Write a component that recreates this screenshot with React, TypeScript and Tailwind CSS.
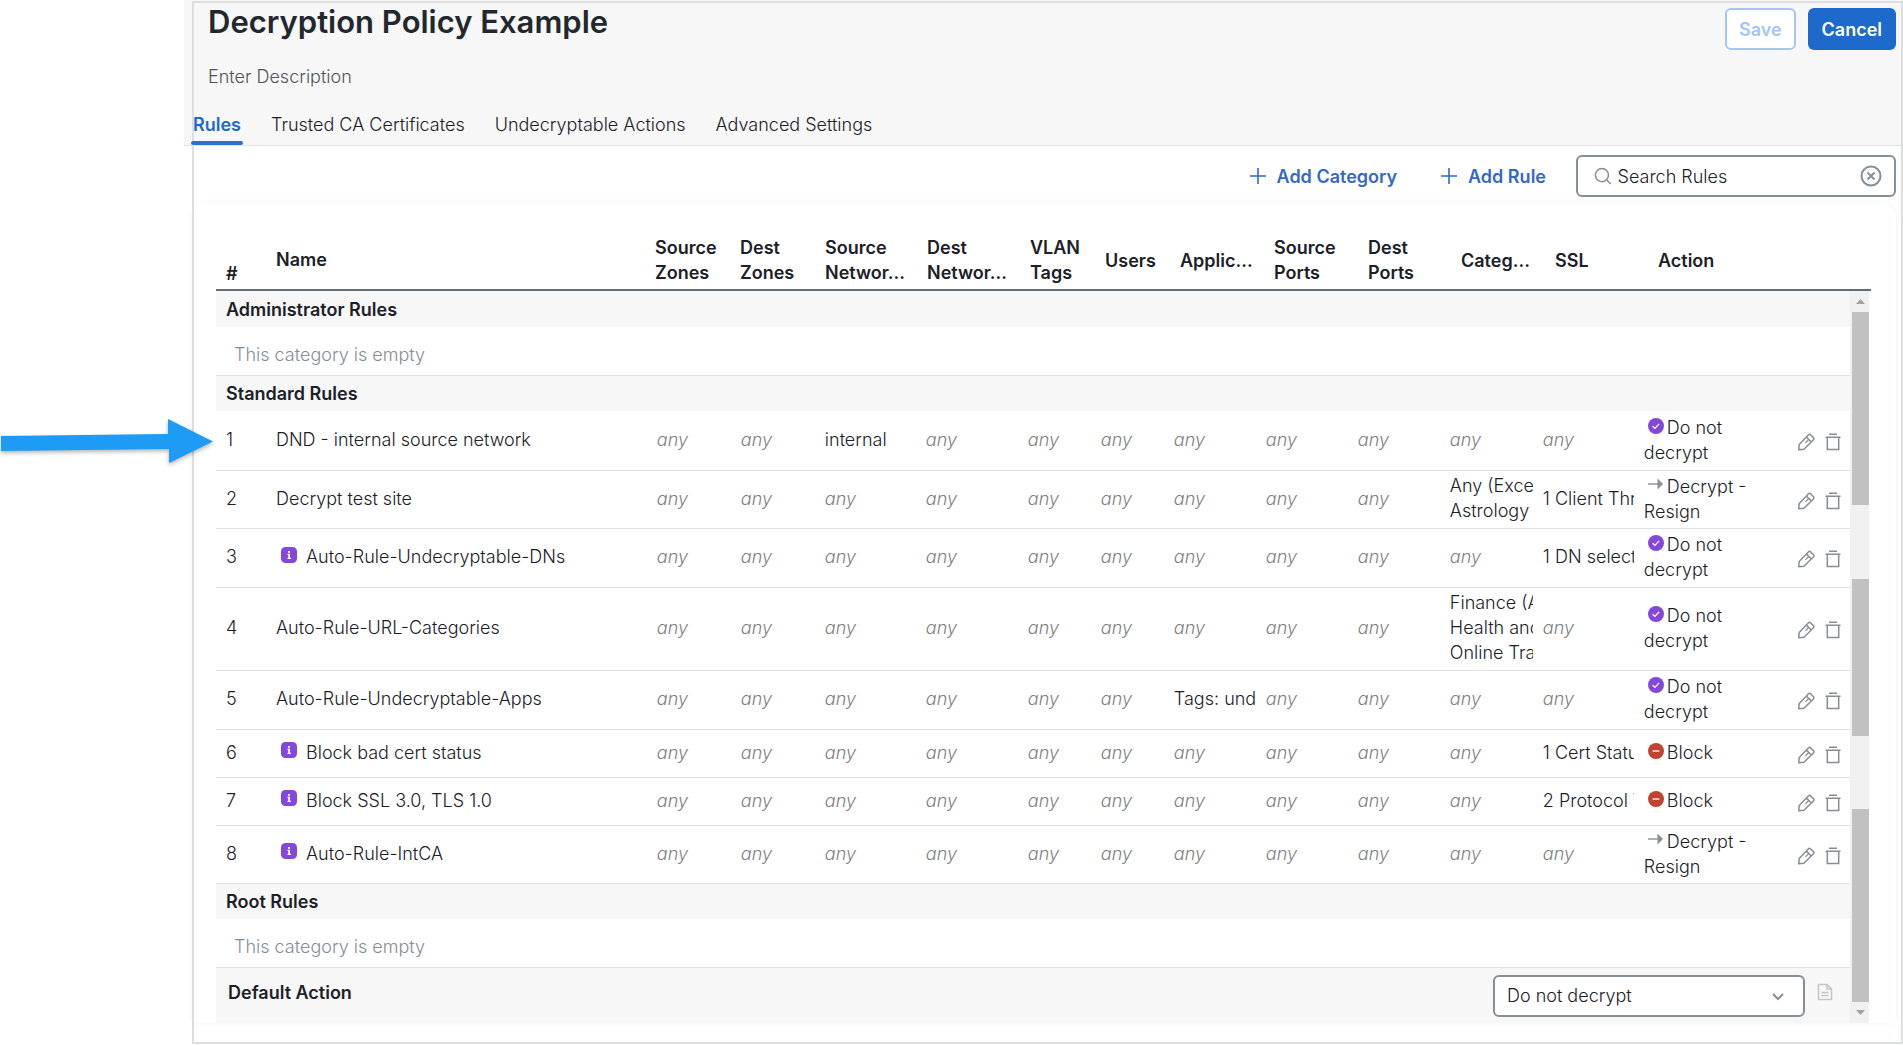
import { useState } from 'react'

const tabs = ['Rules', 'Trusted CA Certificates', 'Undecryptable Actions', 'Advanced Settings']

type Action = 'dnd' | 'resign' | 'block'

type Rule = {
  id: number
  name: string
  info?: boolean
  srcNet?: string
  apps?: string
  categories?: string[]
  ssl?: string
  action: Action
}

const rules: Rule[] = [
  { id: 1, name: 'DND - internal source network', srcNet: 'internal', action: 'dnd' },
  {
    id: 2,
    name: 'Decrypt test site',
    categories: ['Any (Exce', 'Astrology'],
    ssl: '1 Client Thr',
    action: 'resign',
  },
  { id: 3, name: 'Auto-Rule-Undecryptable-DNs', info: true, ssl: '1 DN select', action: 'dnd' },
  {
    id: 4,
    name: 'Auto-Rule-URL-Categories',
    categories: ['Finance (A', 'Health and', 'Online Tra'],
    action: 'dnd',
  },
  { id: 5, name: 'Auto-Rule-Undecryptable-Apps', apps: 'Tags: unde', action: 'dnd' },
  { id: 6, name: 'Block bad cert status', info: true, ssl: '1 Cert Statu', action: 'block' },
  { id: 7, name: 'Block SSL 3.0, TLS 1.0', info: true, ssl: '2 Protocol V', action: 'block' },
  { id: 8, name: 'Auto-Rule-IntCA', info: true, action: 'resign' },
]

const rowHeight: Record<Action, string> = {
  dnd: 'h-[59px]',
  resign: 'h-[58px]',
  block: 'h-12',
}

function PlusIcon() {
  return (
    <svg viewBox="0 0 16 16" className="size-4" stroke="currentColor" strokeWidth="1.6" fill="none">
      <path d="M8 0v16M0 8h16" />
    </svg>
  )
}

function InfoIcon() {
  return (
    <svg viewBox="0 0 16 16" className="size-4 shrink-0">
      <rect width="16" height="16" rx="4.5" fill="#8348da" />
      <path d="M7 4h2v1.7H7zM6.5 6.8H9v4h.8V12H6.5v-1.2h.7V8h-.7z" fill="#fff" />
    </svg>
  )
}

function ActionIcon({ action }: { action: Action }) {
  if (action === 'resign') {
    return (
      <svg viewBox="0 0 16 16" className="mr-[3px] inline size-4 align-baseline">
        <path d="M0 7h10" stroke="#868e96" strokeWidth="1.4" />
        <path d="M9.5 1.5L15 7l-5.5 5.5z" fill="#868e96" />
      </svg>
    )
  }
  return (
    <svg viewBox="0 0 16 16" className="mr-[3px] inline size-4 align-baseline" fill="none">
      <circle cx="8" cy="8" r="8" fill={action === 'dnd' ? '#8348da' : '#c0432f'} />
      {action === 'dnd' ? (
        <path d="M4.6 8.3l2.3 2.1 4.2-4.5" stroke="#fff" strokeWidth="1.3" />
      ) : (
        <path d="M4.5 8h7" stroke="#fff" strokeWidth="1.3" />
      )}
    </svg>
  )
}

function PencilIcon() {
  return (
    <svg viewBox="0 0 18 18" className="size-[18px]" fill="none" stroke="#868e96" strokeWidth="1.5" strokeLinejoin="round">
      <path d="M11.5 1.8q1-.9 2 0l3 3q.9 1 0 2L7 16.2l-5.3.5.5-5.2z" />
      <path d="M9.6 4.4l4.4 4.4" />
      <path d="M11.3 7L8.4 9.900" strokeWidth="1.2" />
    </svg>
  )
}

function TrashIcon() {
  return (
    <svg viewBox="0 0 16 18" className="h-[18px] w-4" fill="none" stroke="#868e96" strokeWidth="1.5">
      <path d="M4 1.2h8M.5 4.2h15M2.3 4.2v12.3h11.4V4.2" />
    </svg>
  )
}

function Cell({ value }: { value?: string }) {
  return (
    <td className="overflow-hidden px-[5px] pb-[2px]">
      <div className="overflow-hidden whitespace-nowrap">
        {value ?? <span className="text-[#808080] italic">any</span>}
      </div>
    </td>
  )
}

function SectionRow({ title }: { title: string }) {
  return (
    <tr className="h-9 bg-[#f7f7f7]">
      <th colSpan={15} scope="colgroup" className="pl-[10px] text-left font-semibold">
        {title}
      </th>
    </tr>
  )
}

function EmptyRow() {
  return (
    <tr className="h-12 border-b border-[#dee0e3]">
      <td colSpan={15} className="pt-[7px] pl-[18px] text-[#868e96]">
        This category is empty
      </td>
    </tr>
  )
}

function RuleRow({ rule }: { rule: Rule }) {
  return (
    <tr className={`border-b border-[#dee0e3] ${rowHeight[rule.action]}`}>
      <td className="pb-[2px] pl-[10px]">{rule.id}</td>
      <td className="pb-[2px] pl-[10px]">
        <div className="flex items-center">
          {rule.info && (
            <span className="mr-[9px] mb-1 ml-[5px]">
              <InfoIcon />
            </span>
          )}
          {rule.name}
        </div>
      </td>
      <Cell />
      <Cell />
      <Cell value={rule.srcNet} />
      <Cell />
      <Cell />
      <Cell />
      <Cell value={rule.apps} />
      <Cell />
      <Cell />
      {rule.categories ? (
        <td className="px-[5px] pt-[2px] pb-[5px]">
          <div className="overflow-hidden whitespace-nowrap">
            {rule.categories.map((c) => (
              <div key={c}>{c}</div>
            ))}
          </div>
        </td>
      ) : (
        <Cell />
      )}
      <Cell value={rule.ssl} />
      <td className="px-[5px] pb-px">
        <div className="w-28">
          <span className="whitespace-nowrap">
            <span className="pl-1" />
            <ActionIcon action={rule.action} />
            {rule.action === 'dnd' && 'Do not'}
            {rule.action === 'resign' && 'Decrypt -'}
            {rule.action === 'block' && 'Block'}
          </span>{' '}
          {rule.action === 'dnd' && 'decrypt'}
          {rule.action === 'resign' && 'Resign'}
        </div>
      </td>
      <td>
        <div className="flex items-center gap-[10px] pt-[3px] pl-3">
          <button type="button" aria-label={`Edit rule ${rule.id}`}>
            <PencilIcon />
          </button>
          <button type="button" aria-label={`Delete rule ${rule.id}`}>
            <TrashIcon />
          </button>
        </div>
      </td>
    </tr>
  )
}

function HeadCell({ lines }: { lines: string[] }) {
  return (
    <th scope="col" className="px-[5px] pb-1 text-left font-semibold whitespace-nowrap">
      {lines.map((l) => (
        <div key={l}>{l}</div>
      ))}
    </th>
  )
}

function TableHead() {
  return (
    <table className="w-full table-fixed border-b-2 border-[#656b75]">
      <colgroup>
        <col className="w-[50px]" />
        <col />
        <col className="w-[85px]" />
        <col className="w-[85px]" />
        <col className="w-[102px]" />
        <col className="w-[103px]" />
        <col className="w-[75px]" />
        <col className="w-[75px]" />
        <col className="w-[94px]" />
        <col className="w-[94px]" />
        <col className="w-[93px]" />
        <col className="w-[94px]" />
        <col className="w-[103px]" />
        <col className="w-[218px]" />
      </colgroup>
      <thead>
        <tr className="h-[54px]">
          <th scope="col" className="pb-[3px] pl-[10px] text-left align-bottom font-semibold">
            #
          </th>
          <th scope="col" className="pb-[5px] pl-[10px] text-left font-semibold">
            Name
          </th>
          <HeadCell lines={['Source', 'Zones']} />
          <HeadCell lines={['Dest', 'Zones']} />
          <HeadCell lines={['Source', 'Networ...']} />
          <HeadCell lines={['Dest', 'Networ...']} />
          <HeadCell lines={['VLAN', 'Tags']} />
          <HeadCell lines={['Users']} />
          <HeadCell lines={['Applic...']} />
          <HeadCell lines={['Source', 'Ports']} />
          <HeadCell lines={['Dest', 'Ports']} />
          <HeadCell lines={['Categ...']} />
          <HeadCell lines={['SSL']} />
          <HeadCell lines={['Action']} />
        </tr>
      </thead>
    </table>
  )
}

function TableBody() {
  return (
    <table className="w-full table-fixed">
      <colgroup>
        <col className="w-[50px]" />
        <col />
        <col className="w-[84px]" />
        <col className="w-[84px]" />
        <col className="w-[101px]" />
        <col className="w-[102px]" />
        <col className="w-[73px]" />
        <col className="w-[73px]" />
        <col className="w-[92px]" />
        <col className="w-[92px]" />
        <col className="w-[92px]" />
        <col className="w-[93px]" />
        <col className="w-[101px]" />
        <col className="w-[146px]" />
        <col className="w-[65px]" />
      </colgroup>
      <tbody>
        <SectionRow title="Administrator Rules" />
        <EmptyRow />
        <SectionRow title="Standard Rules" />
        {rules.map((r) => (
          <RuleRow key={r.id} rule={r} />
        ))}
        <SectionRow title="Root Rules" />
        <EmptyRow />
      </tbody>
    </table>
  )
}

function Scrollbar() {
  return (
    <div className="flex w-[19px] shrink-0 flex-col bg-[#f1f1f1] pl-[2px]" aria-hidden="true">
      <div className="flex h-[21px] items-center justify-center">
        <svg viewBox="0 0 9 5" className="h-[5px] w-[9px]" fill="#a3a3a3">
          <path d="M0 5l4.5-5L9 5z" />
        </svg>
      </div>
      <div className="grow-[193] basis-0 bg-[#c1c1c1]" />
      <div className="grow-[74] basis-0" />
      <div className="grow-[157] basis-0 bg-[#c1c1c1]" />
      <div className="grow-[73] basis-0" />
      <div className="grow-[193] basis-0 bg-[#c1c1c1]" />
      <div className="flex h-[21px] items-center justify-center">
        <svg viewBox="0 0 9 5" className="h-[5px] w-[9px]" fill="#a3a3a3">
          <path d="M0 0l4.5 5L9 0z" />
        </svg>
      </div>
    </div>
  )
}

function DefaultAction() {
  return (
    <div className="flex items-start bg-[#f7f7f7] pt-[7px] pr-[17px] pb-[6px] pl-3">
      <label htmlFor="default-action" className="grow pt-[5px] font-semibold">
        Default Action
      </label>
      <div className="relative w-[312px]">
        <select
          id="default-action"
          className="h-[42px] w-full appearance-none rounded-md border-2 border-[#868e96] bg-white px-3"
        >
          <option>Do not decrypt</option>
        </select>
        <svg
          viewBox="0 0 12 8"
          className="pointer-events-none absolute top-[18px] right-[21px] h-2 w-3"
          fill="none"
          stroke="#868e96"
          strokeWidth="2"
        >
          <path d="M1 1l5 5 5-5" />
        </svg>
      </div>
      <button type="button" aria-label="Logging" className="mt-2 ml-3">
        <svg viewBox="0 0 16 18" className="h-[18px] w-4" fill="none" stroke="#c4c7ca" strokeWidth="1.5">
          <path d="M1.5 1.5H10L14.5 6v10.5h-13zM10 1.5V6h4.5M4.500 9.5h7M4.500 12.5h7" />
        </svg>
      </button>
    </div>
  )
}

function PointerArrow() {
  return (
    <svg
      viewBox="0 0 220 56"
      className="pointer-events-none absolute top-[414px] left-0 z-20 h-14 w-[220px] drop-shadow-[0_2px_2px_rgba(0,0,0,0.3)]"
      aria-hidden="true"
    >
      <path d="M1 22l167-2V5l45 22.5L169 49V35L1 37z" fill="#1d9bf5" />
    </svg>
  )
}

export default function App() {
  const [active, setActive] = useState('Rules')
  const [query, setQuery] = useState('')

  return (
    <div className="relative bg-white pb-[22px] pl-[184px] font-['Inter',sans-serif] text-lg leading-[25px] font-light text-[#1c2127]">
      <header className="border-b border-[#dee2e8] bg-[#f7f7f7]">
        <div className="flex items-start justify-between pt-2 pr-[7px] pl-6">
          <h1 className="text-[31px] leading-7 font-semibold text-[#23282e]">Decryption Policy Example</h1>
          <div className="flex gap-3">
            <button
              type="button"
              disabled
              className="h-[42px] rounded-md border-2 border-[#a5c6f5] bg-white px-3 font-semibold text-[#a5c6f5]"
            >
              Save
            </button>
            <button type="button" className="h-[42px] rounded-md bg-[#1d69cc] px-[14px] font-semibold text-white">
              Cancel
            </button>
          </div>
        </div>
        <p className="mt-[14px] pl-6 text-[#4f545a]">Enter Description</p>
        <nav className="mt-[23px] flex gap-[26px] pl-[7px]">
          {tabs.map((t) => (
            <button
              key={t}
              type="button"
              onClick={() => setActive(t)}
              className={
                t === active
                  ? 'relative z-20 px-[2px] pb-2 font-semibold text-[#1d69cc]'
                  : 'relative px-[2px] pb-2'
              }
            >
              {t}
              {t === active && <span className="absolute inset-x-0 bottom-0 h-1 rounded-full bg-[#2b72c9]" />}
            </button>
          ))}
        </nav>
      </header>

      <div className="flex items-center justify-end pt-[9px] pr-[7px] font-semibold text-[#3568c6]">
        <button type="button" className="flex items-center gap-[11px]">
          <PlusIcon />
          Add Category
        </button>
        <button type="button" className="ml-[44px] flex items-center gap-[11px]">
          <PlusIcon />
          Add Rule
        </button>
        <div className="ml-[30px] flex h-[42px] w-80 items-center rounded-md border-2 border-[#868e96] bg-white pr-3 pl-4">
          <svg viewBox="0 0 20 20" className="mr-[6px] size-5" fill="none" stroke="#868e96" strokeWidth="1.7">
            <circle cx="9" cy="9" r="7.5" />
            <path d="M14 14l5 5" />
          </svg>
          <input
            aria-label="Search Rules"
            value={query}
            onChange={(e) => setQuery(e.target.value)}
            placeholder="Search Rules"
            className="min-w-0 grow font-light text-[#1c2127] outline-none placeholder:text-[#1c2127]"
          />
          <button type="button" aria-label="Clear search" onClick={() => setQuery('')}>
            <svg viewBox="0 0 22 22" className="size-[22px]" fill="none" stroke="#868e96" strokeWidth="2">
              <circle cx="11" cy="11" r="9.5" />
              <path d="M7.5 7.5l7 7M14.5 7.5l-7 7" />
            </svg>
          </button>
        </div>
      </div>

      <main className="mt-[6px] mr-[7px] ml-2 rounded-t-2xl pt-8 pr-[25px] pl-6 shadow-[0_0_6px_rgba(0,0,0,0.05)]">
        <TableHead />
        <div className="flex pr-[2px]">
          <div className="min-w-0 grow">
            <TableBody />
            <DefaultAction />
          </div>
          <Scrollbar />
        </div>
      </main>

      <div className="pointer-events-none absolute top-px right-0 bottom-px left-[192px] z-10 border-2 border-[#dcdee0]" />
      <PointerArrow />
    </div>
  )
}
